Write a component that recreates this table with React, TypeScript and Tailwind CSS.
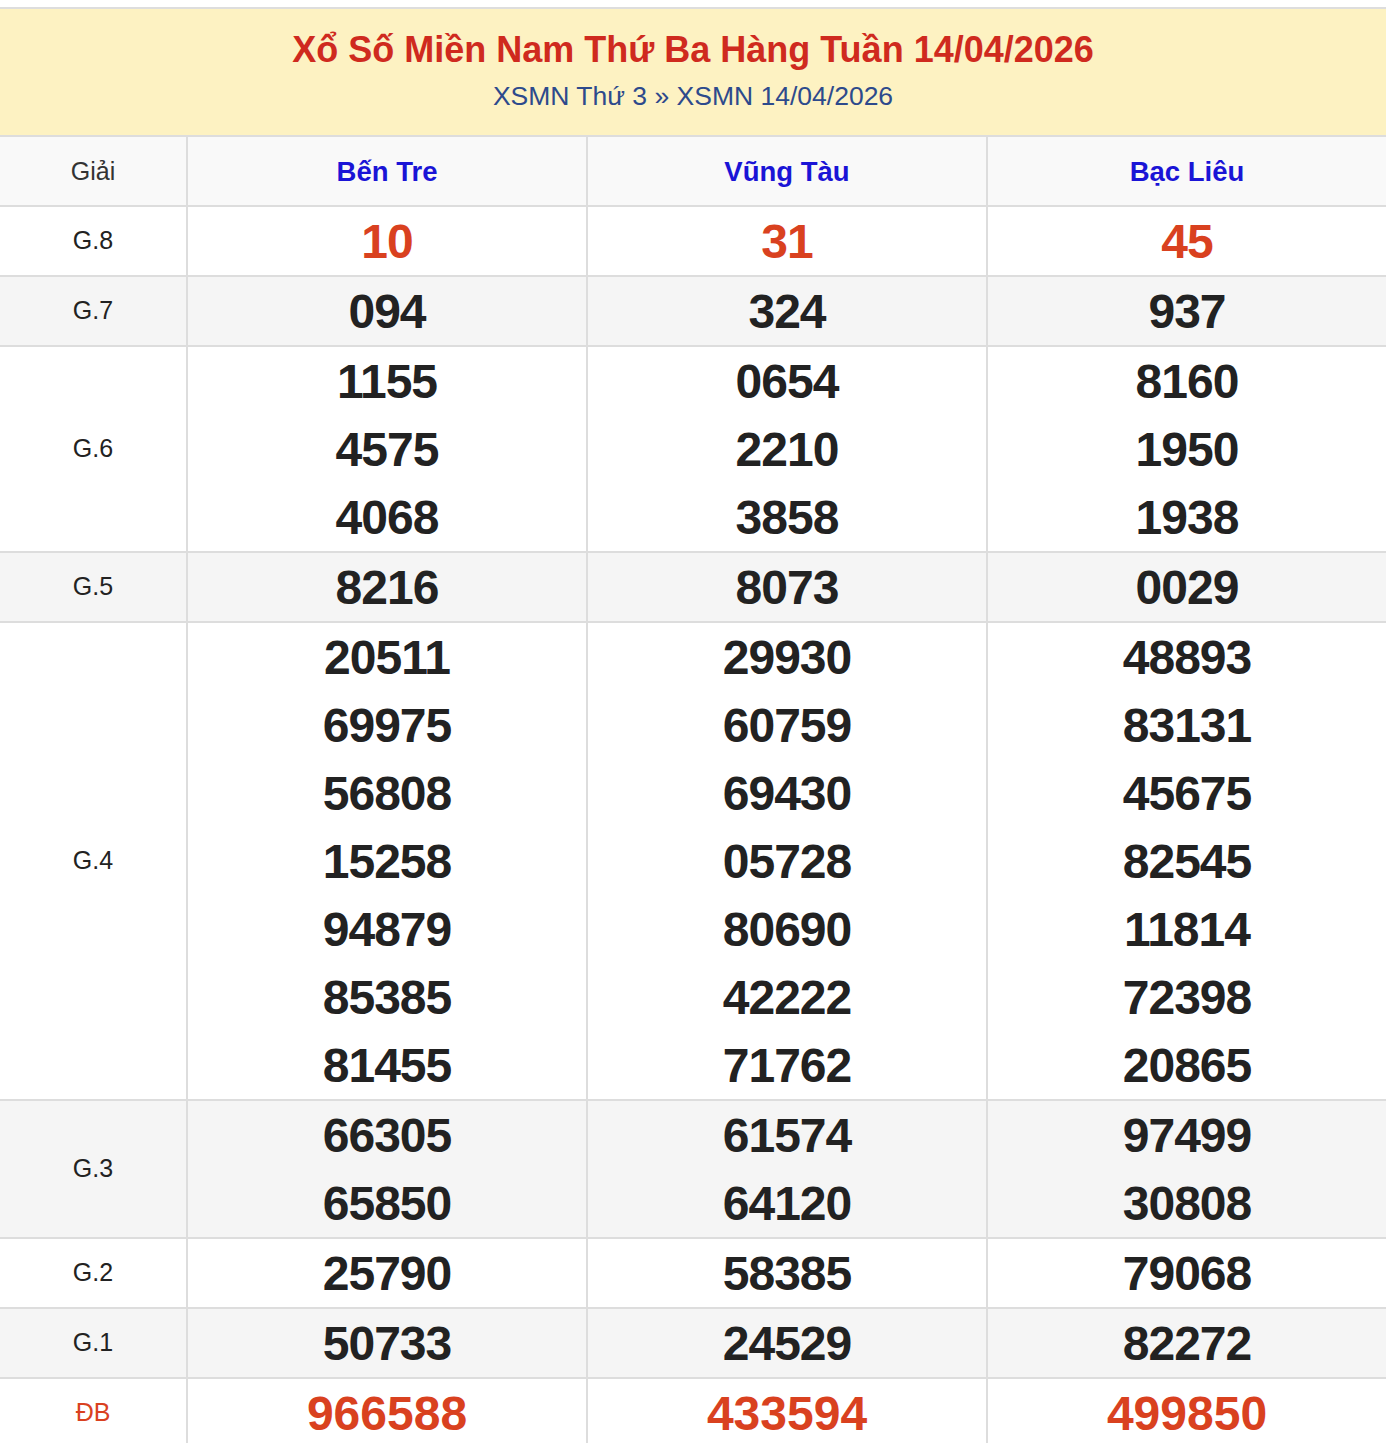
import React from 'react';

type Prize = {
  label: string;
  values: [string[], string[], string[]];
  red?: boolean;
};

const stations = ['Bến Tre', 'Vũng Tàu', 'Bạc Liêu'];

const prizes: Prize[] = [
  { label: 'G.8', values: [['10'], ['31'], ['45']], red: true },
  { label: 'G.7', values: [['094'], ['324'], ['937']] },
  {
    label: 'G.6',
    values: [
      ['1155', '4575', '4068'],
      ['0654', '2210', '3858'],
      ['8160', '1950', '1938'],
    ],
  },
  { label: 'G.5', values: [['8216'], ['8073'], ['0029']] },
  {
    label: 'G.4',
    values: [
      ['20511', '69975', '56808', '15258', '94879', '85385', '81455'],
      ['29930', '60759', '69430', '05728', '80690', '42222', '71762'],
      ['48893', '83131', '45675', '82545', '11814', '72398', '20865'],
    ],
  },
  {
    label: 'G.3',
    values: [
      ['66305', '65850'],
      ['61574', '64120'],
      ['97499', '30808'],
    ],
  },
  { label: 'G.2', values: [['25790'], ['58385'], ['79068']] },
  { label: 'G.1', values: [['50733'], ['24529'], ['82272']] },
  { label: 'ĐB', values: [['966588'], ['433594'], ['499850']], red: true },
];

const font = "font-['Liberation_Sans',Arial,sans-serif]";

export default function App() {
  return (
    <div className={`w-[1386px] bg-white pt-[7px] ${font}`}>
      <div className="border-t-2 border-[#dddddd] bg-[#fdf2c2] pt-[16px] pb-[20px] text-center">
        <h1 className="text-[36px] leading-[50px] font-bold text-[#cf2a1e]">
          Xổ Số Miền Nam Thứ Ba Hàng Tuần 14/04/2026
        </h1>
        <p className="mt-[2px] text-[26.5px] leading-[38px] text-[#2d4a8c]">
          XSMN Thứ 3 » XSMN 14/04/2026
        </p>
      </div>

      <div className="grid h-[70px] grid-cols-[186px_1fr_1fr_1fr] border-t-2 border-[#dddddd] bg-[#f9f9f9]">
        <div className="flex items-center justify-center pt-[2px] text-[25px] text-[#333333]">
          Giải
        </div>
        {stations.map((s) => (
          <div
            key={s}
            className="flex items-center justify-center border-l-2 border-[#dddddd] pt-[2px] text-[27.5px] font-bold text-[#1a14d6]"
          >
            {s}
          </div>
        ))}
      </div>

      {prizes.map((p, i) => (
        <div
          key={p.label}
          className={`grid grid-cols-[186px_1fr_1fr_1fr] border-t-2 border-[#dddddd] ${
            i % 2 === 1 ? 'bg-[#f5f5f5]' : 'bg-white'
          }`}
        >
          <div
            className={`flex items-center justify-center text-[25px] ${
              p.label === 'ĐB' ? 'text-[#d9411f]' : 'text-[#222222]'
            }`}
          >
            {p.label}
          </div>
          {p.values.map((col, j) => (
            <div
              key={j}
              className="flex flex-col border-l-2 border-[#dddddd]"
            >
              {col.map((v) => (
                <div
                  key={v}
                  className={`flex h-[68px] items-center justify-center pt-[2px] text-[48px] font-bold ${
                    p.red ? 'text-[#d9411f]' : 'text-[#222222]'
                  } ${p.label === 'ĐB' ? 'tracking-[0px]' : 'tracking-[-1px]'}`}
                >
                  {v}
                </div>
              ))}
            </div>
          ))}
        </div>
      ))}
    </div>
  );
}
